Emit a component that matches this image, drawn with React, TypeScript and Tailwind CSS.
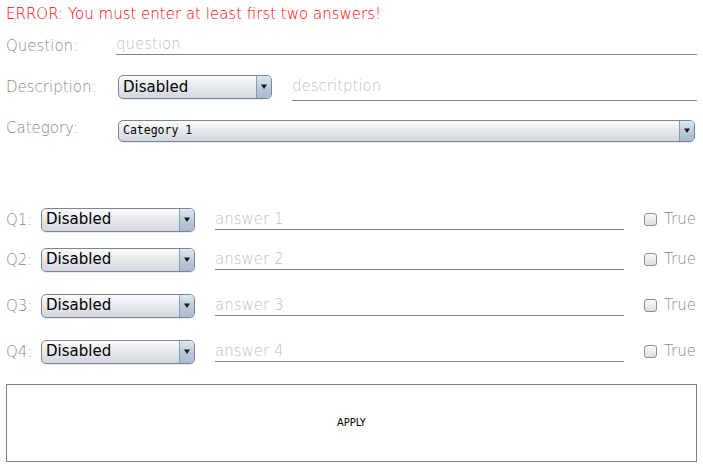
import React from "react";

function Arrow() {
  return (
    <svg width="8" height="6" viewBox="0 0 8 6">
      <path d="M1 0.5 L7 0.5 L4 5 Z" fill="#1a1a1a" />
    </svg>
  );
}

function Combo({ text, w, h, small }: { text: string; w: string; h: string; small?: boolean }) {
  return (
    <div
      className={`${w} ${h} flex shrink-0 rounded-[5px] border border-[#7d8594] bg-[linear-gradient(#fbfbfc,#e4e6eb_55%,#d3d6de)] shadow-[0_1px_0_#e9ebef] overflow-hidden`}
    >
      <div
        className={`flex-1 flex items-center pl-[4px] text-black ${
          small ? "font-['DejaVu_Sans_Mono'] text-[11.5px]" : "font-['DejaVu_Sans'] text-[15px]"
        }`}
      >
        {text}
      </div>
      <div className="w-[15px] border-l border-[#8b9cb1] bg-[linear-gradient(#dfe7ef,#b9c9da_55%,#a8bbd0)] flex items-center justify-center">
        <Arrow />
      </div>
    </div>
  );
}

function Field({ placeholder, cls }: { placeholder: string; cls: string }) {
  return (
    <div className={`${cls} border-b border-[#858585] text-[15px] text-[#c0c0c0] font-['DejaVu_Sans'] font-light leading-[18px]`}>
      {placeholder}
    </div>
  );
}

function Check() {
  return (
    <div className="flex items-center gap-[7px]">
      <div className="w-[13px] h-[13px] rounded-[3px] border border-[#8d8f93] bg-[linear-gradient(#fafafa,#dcdee2)]" />
      <span className="text-[15px] text-[#8a8a8a] font-['DejaVu_Sans'] font-light">True</span>
    </div>
  );
}

function QRow({ n, mt }: { n: number; mt: string }) {
  return (
    <div className={`flex items-center h-[23px] ${mt}`}>
      <span className="w-[41px] shrink-0 pl-[6px] text-[15px] text-[#8a8a8a] font-light mt-[2px]">Q{n}:</span>
      <Combo text="Disabled" w="w-[154px]" h="h-[24px]" />
      <Field placeholder={`answer ${n}`} cls="ml-[20px] w-[409px] mt-[1px] pb-[1px] shrink-0" />
      <div className="ml-[20px]">
        <Check />
      </div>
    </div>
  );
}

export default function App() {
  return (
    <div className="w-[703px] h-[468px] bg-white font-['DejaVu_Sans'] overflow-hidden">
      <div className="pl-[6px] pt-[5px] text-[15px] leading-[18px] text-[#ff0000] font-light">
        ERROR: You must enter at least first two answers!
      </div>
      <div className="flex items-end mt-[12px] h-[20px]">
        <span className="w-[116px] pl-[6px] text-[15px] text-[#8a8a8a] font-light leading-[18px]">Question:</span>
        <Field placeholder="question" cls="w-[581px] pb-[1px]" />
      </div>
      <div className="flex items-center mt-[20px] h-[24px]">
        <span className="w-[118px] pl-[6px] text-[15px] text-[#8a8a8a] font-light">Description:</span>
        <Combo text="Disabled" w="w-[154px]" h="h-[24px]" />
        <Field placeholder="descritption" cls="ml-[20px] w-[405px] mt-[3px] pb-[5px]" />
      </div>
      <div className="flex items-start mt-[21px] h-[22px]">
        <span className="w-[118px] pl-[6px] text-[15px] text-[#8a8a8a] font-light leading-[16px]">Category:</span>
        <Combo text="Category 1" w="w-[577px]" h="h-[22px]" small />
      </div>
      <QRow n={1} mt="mt-[66px]" />
      <QRow n={2} mt="mt-[17px]" />
      <QRow n={3} mt="mt-[23px]" />
      <QRow n={4} mt="mt-[23px]" />
      <div className="mx-[6px] mt-[21px] h-[78px] border border-[#808080] flex items-center justify-center text-[11px] text-black font-['DejaVu_Sans_Condensed']">
        APPLY
      </div>
    </div>
  );
}
